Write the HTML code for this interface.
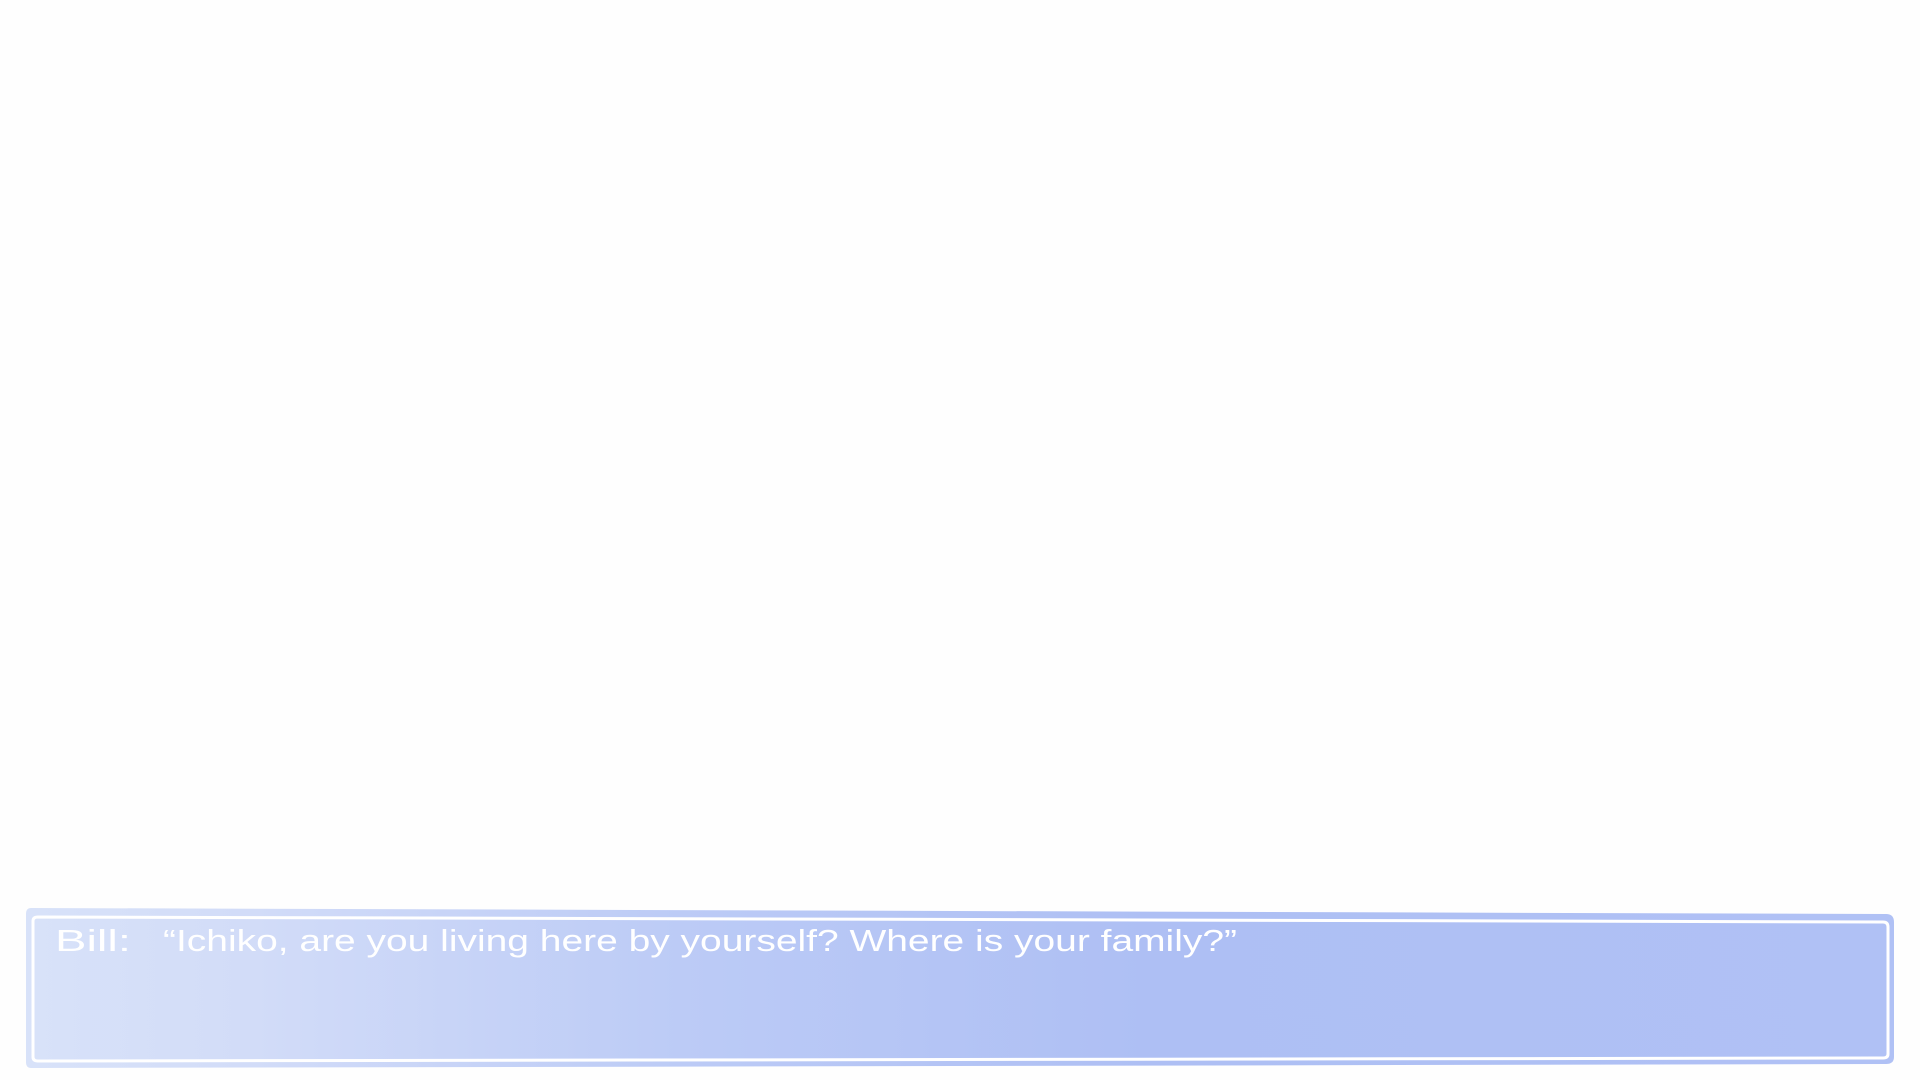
<!DOCTYPE html>
<html><head><meta charset="utf-8"><style>
html,body{margin:0;padding:0;width:1920px;height:1080px;background:#fefefe;overflow:hidden}
</style></head><body>
<svg width="1920" height="1080" style="position:absolute;left:0;top:0">
<defs>
<linearGradient id="g" x1="0" x2="1" y1="0" y2="0">
<stop offset="0" stop-color="#d8e2f9"/>
<stop offset="0.12" stop-color="#d2dcf8"/>
<stop offset="0.35" stop-color="#bccbf6"/>
<stop offset="0.6" stop-color="#aebff4"/>
<stop offset="1" stop-color="#b0c1f5"/>
</linearGradient>
</defs>
<path d="M31 908 L1886 914 Q1894 914 1894 922 L1894 1057 Q1894 1064 1886 1064 L31 1068 Q26 1068 26 1062 L26 914 Q26 908 31 908 Z" fill="url(#g)"/>
<path d="M38 917 L1883 922 Q1888 922 1888 927 L1888 1054 Q1888 1058 1883 1058 L38 1061 Q33 1061 33 1057 L33 921 Q33 917 38 917 Z" fill="none" stroke="#ffffff" stroke-width="3"/>
<text x="55" y="951" font-family="Liberation Sans, sans-serif" font-size="31" fill="#ffffff" textLength="76" lengthAdjust="spacingAndGlyphs">Bill:</text>
<text x="163" y="951" font-family="Liberation Sans, sans-serif" font-size="31" fill="#ffffff" textLength="1074" lengthAdjust="spacingAndGlyphs">“Ichiko, are you living here by yourself? Where is your family?”</text>
</svg>
</body></html>
